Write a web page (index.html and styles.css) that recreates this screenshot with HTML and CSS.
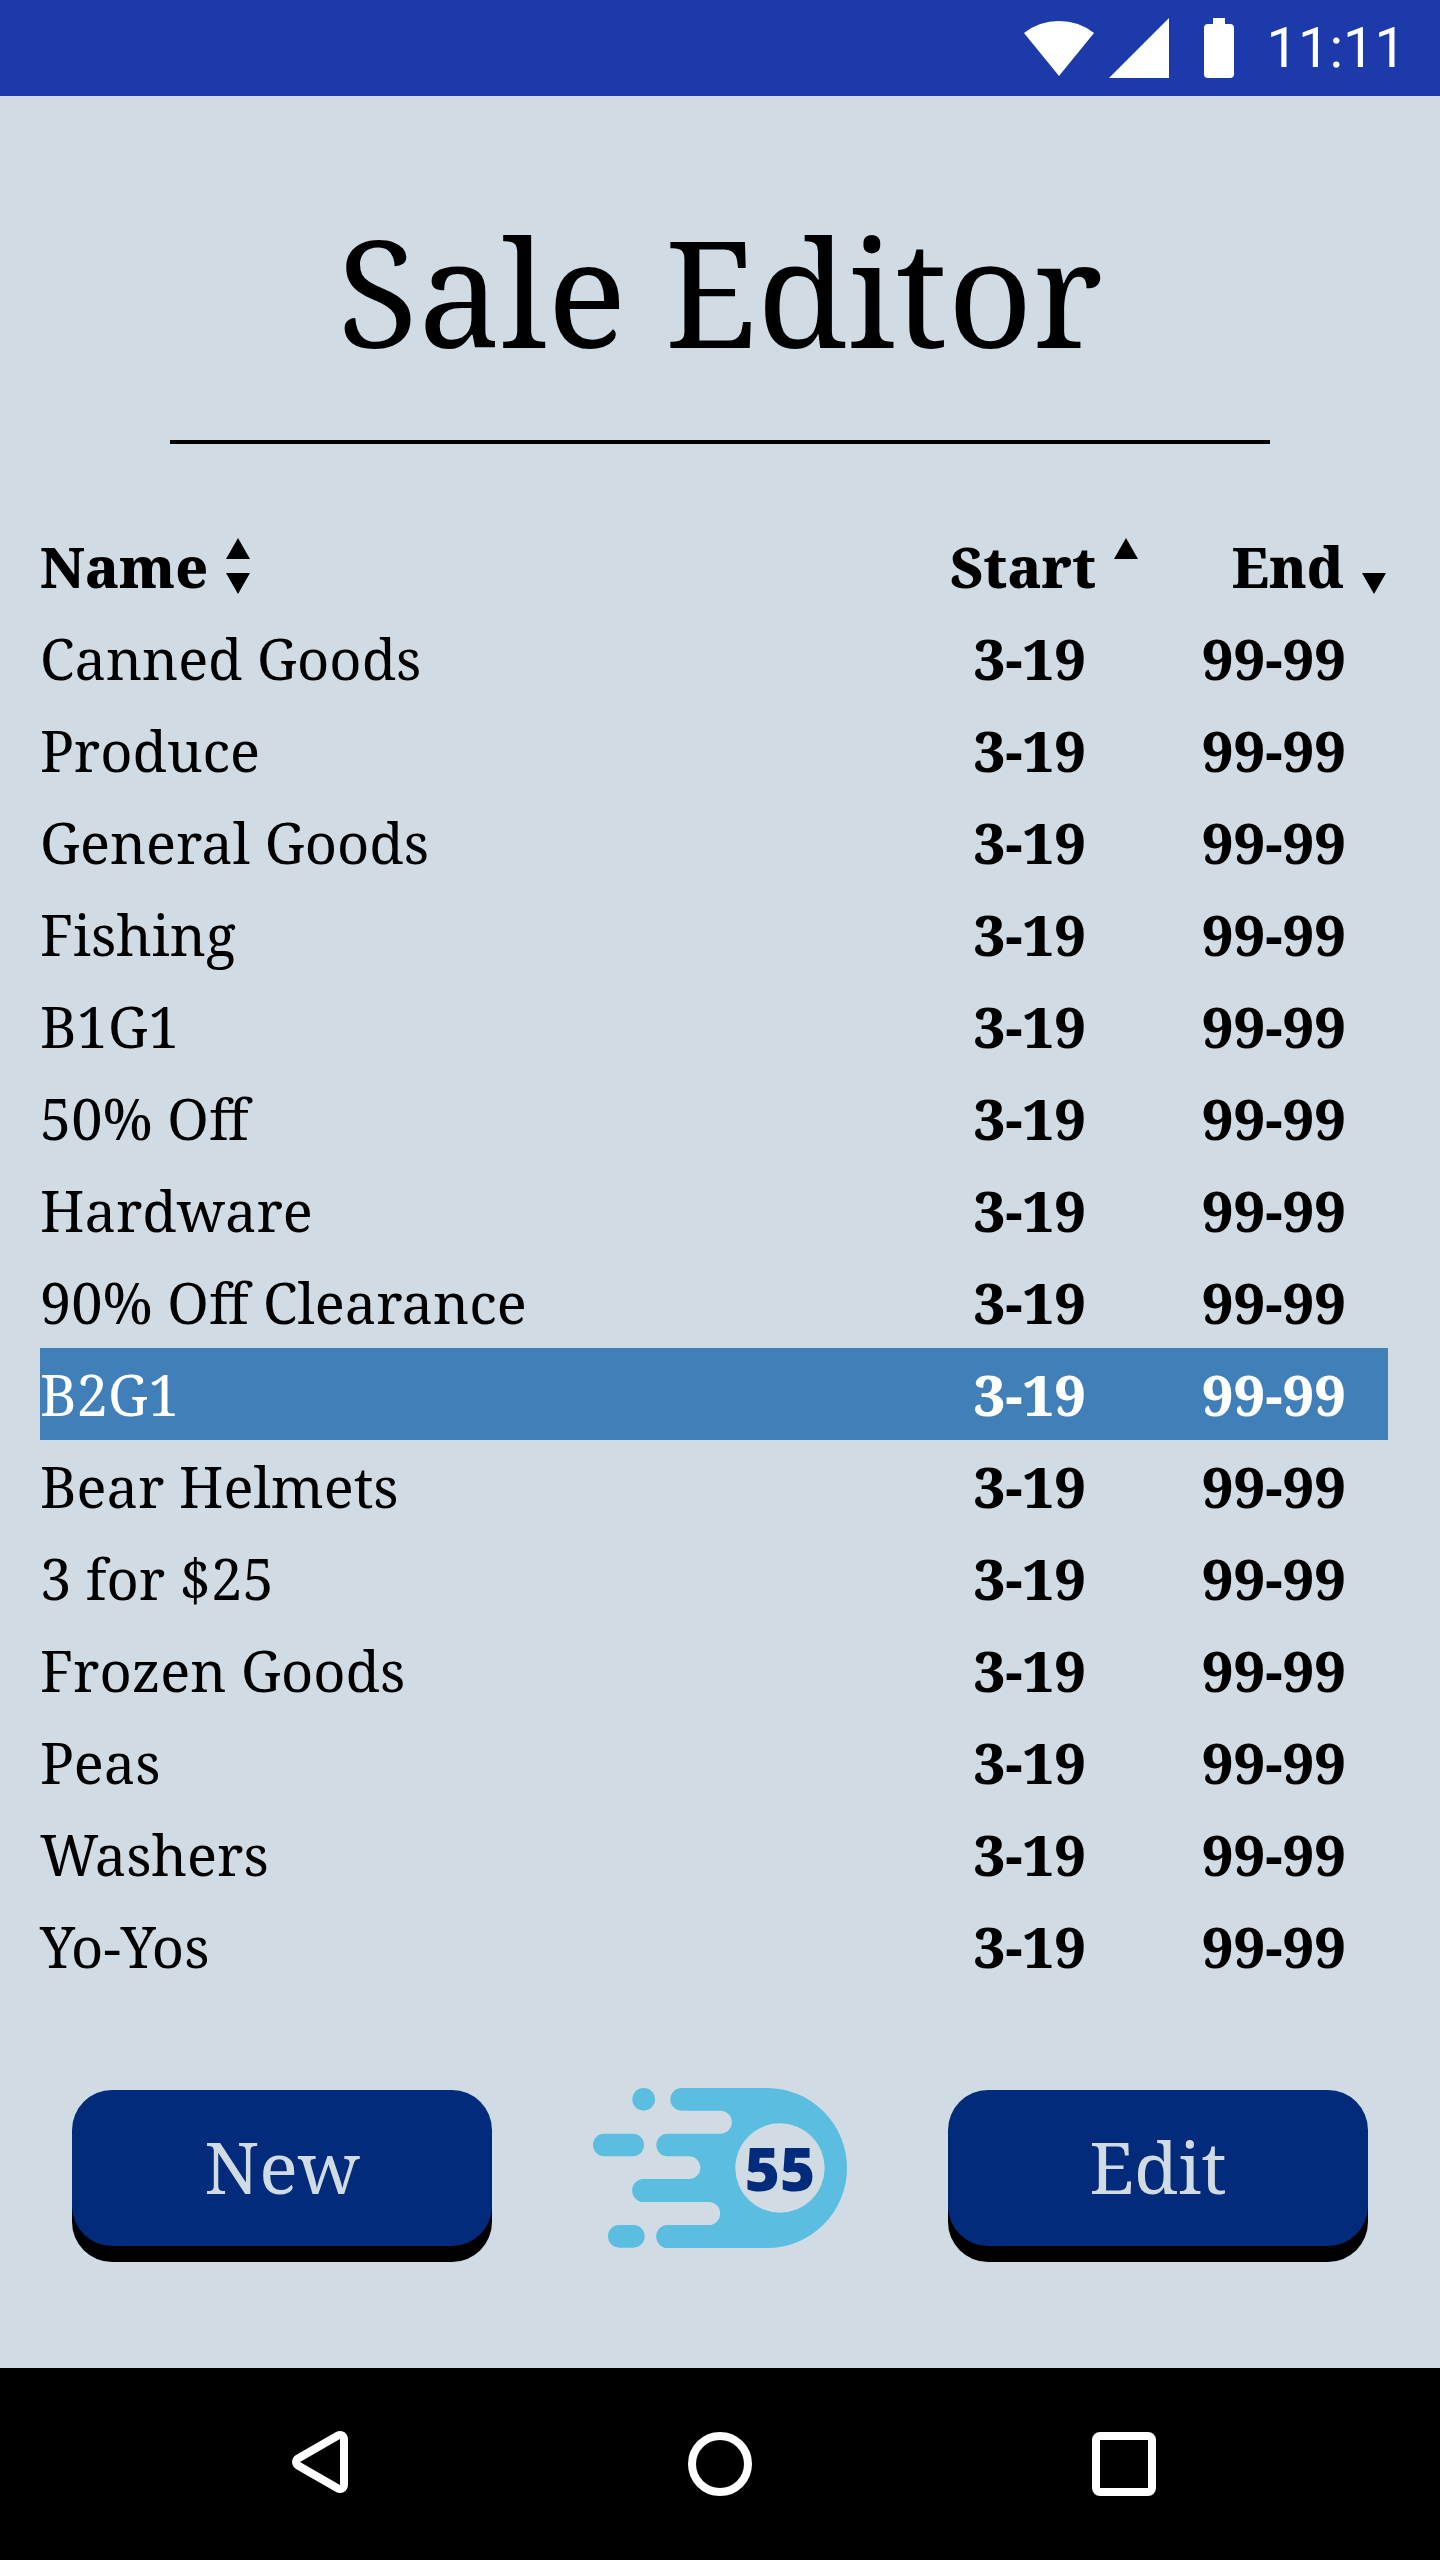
FILE: index.html
```html
<!DOCTYPE html>
<html lang="en">
<head>
<meta charset="utf-8">
<meta name="viewport" content="width=device-width, initial-scale=1">
<title>Sale Editor</title>
<link rel="stylesheet" href="styles.css">
</head>
<body>
<header class="status">
  <svg class="status-wifi" viewBox="0 0 70 60" aria-hidden="true"><path d="M0 15Q15 3 35 3T70 15L35 58Z"/></svg>
  <svg class="status-signal" viewBox="0 0 60 60" aria-hidden="true"><path d="M60 0V60H0Z"/></svg>
  <svg class="status-battery" viewBox="0 0 30 60" aria-hidden="true"><path d="M9 0H21V6H26A4 4 0 0 1 30 10V56A4 4 0 0 1 26 60H4A4 4 0 0 1 0 56V10A4 4 0 0 1 4 6H9Z"/></svg>
  <time class="clock">11:11</time>
</header>
<main class="page">
  <h1 class="title">Sale Editor</h1>
  <hr class="rule">
  <table class="sales">
    <thead>
      <tr>
        <th class="col-name" scope="col"><button class="sort" type="button">Name<svg class="arrows" viewBox="0 0 24 56" aria-hidden="true"><path d="M12 0L24 21H0ZM12 56L0 35H24Z"/></svg></button></th>
        <th class="col-start" scope="col"><button class="sort" type="button">Start<svg class="arrows" viewBox="0 0 24 56" aria-hidden="true"><path d="M12 0L24 21H0Z"/></svg></button></th>
        <th class="col-end" scope="col"><button class="sort" type="button">End<svg class="arrows" viewBox="0 0 24 56" aria-hidden="true"><path d="M12 56L0 35H24Z"/></svg></button></th>
      </tr>
    </thead>
    <tbody>
      <tr><td>Canned Goods</td><td class="start">3-19</td><td class="end">99-99</td></tr>
      <tr><td>Produce</td><td class="start">3-19</td><td class="end">99-99</td></tr>
      <tr><td>General Goods</td><td class="start">3-19</td><td class="end">99-99</td></tr>
      <tr><td>Fishing</td><td class="start">3-19</td><td class="end">99-99</td></tr>
      <tr><td>B1G1</td><td class="start">3-19</td><td class="end">99-99</td></tr>
      <tr><td>50% Off</td><td class="start">3-19</td><td class="end">99-99</td></tr>
      <tr><td>Hardware</td><td class="start">3-19</td><td class="end">99-99</td></tr>
      <tr><td>90% Off Clearance</td><td class="start">3-19</td><td class="end">99-99</td></tr>
      <tr class="selected"><td>B2G1</td><td class="start">3-19</td><td class="end">99-99</td></tr>
      <tr><td>Bear Helmets</td><td class="start">3-19</td><td class="end">99-99</td></tr>
      <tr><td>3 for $25</td><td class="start">3-19</td><td class="end">99-99</td></tr>
      <tr><td>Frozen Goods</td><td class="start">3-19</td><td class="end">99-99</td></tr>
      <tr><td>Peas</td><td class="start">3-19</td><td class="end">99-99</td></tr>
      <tr><td>Washers</td><td class="start">3-19</td><td class="end">99-99</td></tr>
      <tr><td>Yo-Yos</td><td class="start">3-19</td><td class="end">99-99</td></tr>
    </tbody>
  </table>
  <div class="actions">
    <button class="action" type="button">New</button>
    <svg class="logo" viewBox="66 84 762 480" role="img" aria-label="55">
      <g class="comet">
        <path d="M332 84H588A240 240 0 0 1 588 564H290A34 34 0 0 1 290 495H413A34 34 0 0 0 413 426H218A34 34 0 0 1 218 357H354A34 34 0 0 0 354 289H290A34 34 0 0 1 290 221H448A34 34 0 0 0 448 152H332A34 34 0 0 1 332 84Z"/>
        <circle cx="218" cy="118" r="34"/>
        <rect x="66" y="221" width="153" height="68" rx="34"/>
        <rect x="111" y="495" width="110" height="68" rx="34"/>
      </g>
      <circle class="core" cx="627" cy="324" r="134"/>
      <text class="count" x="627" y="394" text-anchor="middle">55</text>
    </svg>
    <button class="action" type="button">Edit</button>
  </div>
</main>
<nav class="navbar" aria-label="System">
  <button class="nav" type="button" aria-label="Back"><svg viewBox="0 0 64 64"><path d="M16 30L56 7V53Z"/></svg></button>
  <button class="nav" type="button" aria-label="Home"><svg viewBox="0 0 64 64"><circle cx="32" cy="32" r="24"/></svg></button>
  <button class="nav" type="button" aria-label="Recent apps"><svg viewBox="0 0 64 64"><rect x="8" y="8" width="48" height="48"/></svg></button>
</nav>
</body>
</html>
```
FILE: styles.css
```css
* {
  box-sizing: border-box;
}

body {
  margin: 0;
  min-height: 100vh;
  display: flex;
  flex-direction: column;
  background: #d0dbe4;
  color: #000;
  font-family: "Noto Serif", "Droid Serif", "DejaVu Serif", serif;
  font-size: 56px;
}

button {
  margin: 0;
  padding: 0;
  border: 0;
  background: none;
  color: inherit;
  font: inherit;
  cursor: pointer;
}

.status {
  height: 96px;
  padding-right: 34px;
  display: flex;
  align-items: center;
  justify-content: flex-end;
  background: #1d3aab;
  color: #fff;
  fill: #fff;
  font-family: Roboto, sans-serif;
}

.status-wifi {
  width: 70px;
  height: 60px;
  margin-right: 15px;
}

.status-signal {
  width: 60px;
  height: 60px;
  margin-right: 35px;
}

.status-battery {
  width: 30px;
  height: 60px;
  margin-right: 33px;
}

.page {
  flex: 1;
  display: flex;
  flex-direction: column;
  padding-top: 95px;
}

.title {
  margin: 0 0 49px;
  font-size: 148px;
  font-weight: 400;
  line-height: 200px;
  text-align: center;
}

.rule {
  width: calc(100% - 340px);
  height: 4px;
  margin: 0 auto 76px;
  border: 0;
  background: #000;
}

.sales {
  width: calc(100% - 92px);
  margin: 0 52px 0 40px;
  border-collapse: collapse;
  table-layout: fixed;
}

.sales th,
.sales td {
  height: 92px;
  padding: 0;
  line-height: 92px;
  text-align: left;
  white-space: nowrap;
}

.sales th {
  font-weight: 800;
}

.sales .col-start,
.sales .col-end {
  width: 248px;
  padding-right: 2px;
  text-align: right;
}

.sort {
  display: inline-flex;
  align-items: center;
  gap: 18px;
  height: 92px;
  vertical-align: top;
}

.arrows {
  width: 24px;
  height: 56px;
}

.sales .start,
.sales .end {
  font-weight: 800;
  text-align: right;
}

.sales .start {
  padding-right: 54px;
}

.sales .end {
  padding-right: 42px;
}

.selected {
  background: #407fb8;
  color: #fff;
}

.actions {
  margin-top: 96px;
  padding: 0 72px;
  display: flex;
  align-items: center;
  justify-content: space-between;
}

.action {
  width: 420px;
  height: 156px;
  margin: 2px 0;
  padding-bottom: 4px;
  border-radius: 40px;
  box-shadow: 0 16px 0 #000;
  background: #022b7c;
  color: #d0dbe4;
  font-size: 72px;
  line-height: 152px;
}

.logo {
  width: 254px;
  height: 160px;
}

.comet {
  fill: #5bbee0;
}

.core {
  fill: #d0dbe4;
}

.count {
  fill: #022b7c;
  font-family: "Open Sans", "Noto Sans", sans-serif;
  font-size: 180px;
  font-weight: 800;
}

.navbar {
  height: 192px;
  display: flex;
  align-items: center;
  justify-content: center;
  gap: 340px;
  background: #000;
}

.nav {
  width: 64px;
  height: 64px;
}

.nav svg {
  display: block;
  overflow: visible;
  fill: #000;
  stroke: #fff;
  stroke-width: 16px;
  stroke-linejoin: round;
  paint-order: stroke;
}
```
